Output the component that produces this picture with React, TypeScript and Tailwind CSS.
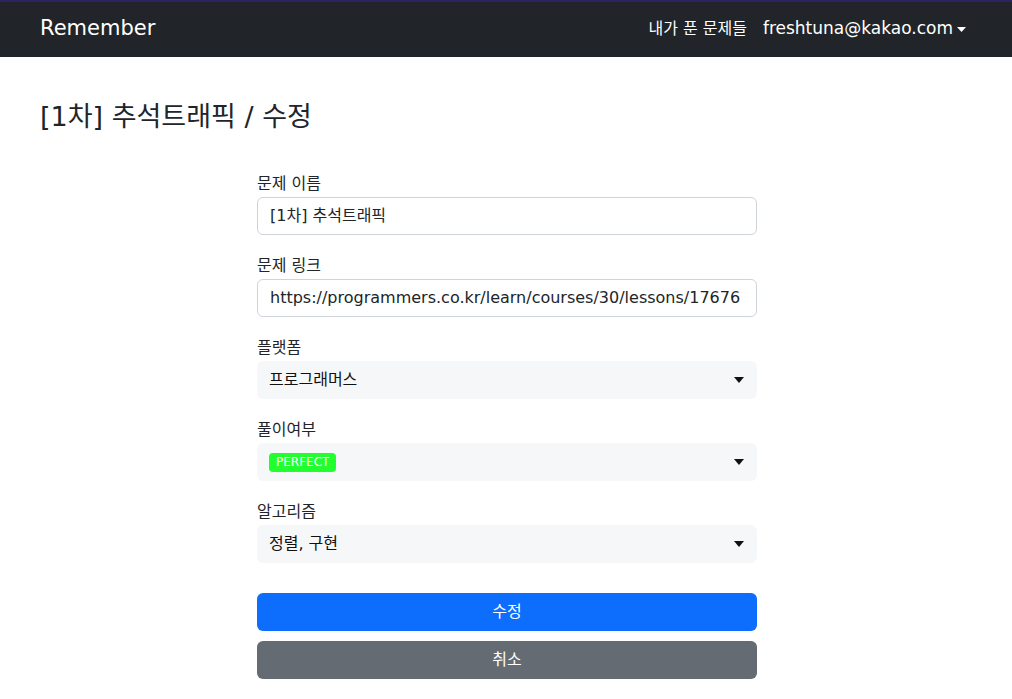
const FONT = "font-['DejaVu_Sans','Noto_Sans_CJK_KR',sans-serif]"

function Caret() {
  return (
    <svg width="10" height="6" viewBox="0 0 10 6" className="shrink-0">
      <path d="M0 0h10L5 6z" fill="#111" />
    </svg>
  )
}

function TextField({ label, value }: { label: string; value: string }) {
  return (
    <div className="flex flex-col">
      <label className="text-[16px] leading-6 text-[#212529] mb-px">{label}</label>
      <div className="h-[38px] border border-[#ced4da] rounded-[6px] px-3 flex items-center overflow-hidden">
        <span className="text-[16px] text-[#212529] whitespace-nowrap">{value}</span>
      </div>
    </div>
  )
}

function SelectField({ label, children }: { label: string; children: React.ReactNode }) {
  return (
    <div className="flex flex-col">
      <label className="text-[16px] leading-6 text-[#212529] mb-px">{label}</label>
      <div className="h-[38px] bg-[#f6f7f9] rounded-[6px] pl-3 pr-[13px] flex items-center justify-between">
        <div className="flex items-center">{children}</div>
        <Caret />
      </div>
    </div>
  )
}

export default function App() {
  return (
    <div className={`min-h-screen bg-white ${FONT}`}>
      <nav className="h-[57px] bg-[#212529] border-t-2 border-[#2d2262] flex items-center justify-between pl-10 pr-[46px] pb-px">
        <span className="text-white text-[21px]">Remember</span>
        <div className="flex items-center gap-[16px] text-white">
          <span className="text-[16px]">내가 푼 문제들</span>
          <span className="flex items-center gap-1 text-[17px]">
            freshtuna@kakao.com
            <svg width="9" height="5" viewBox="0 0 9 5">
              <path d="M0 0h9L4.5 5z" fill="#fff" />
            </svg>
          </span>
        </div>
      </nav>

      <main className="px-10">
        <h2 className="text-[27px] text-[#212529] mt-[40px] leading-[40px]">[1차] 추석트래픽 / 수정</h2>

        <form className="w-[500px] mx-auto translate-x-px mt-[35px] flex flex-col gap-[19px]">
          <TextField label="문제 이름" value="[1차] 추석트래픽" />
          <TextField label="문제 링크" value="https://programmers.co.kr/learn/courses/30/lessons/17676" />
          <SelectField label="플랫폼">
            <span className="text-[16px] text-[#111]">프로그래머스</span>
          </SelectField>
          <SelectField label="풀이여부">
            <span className="bg-[#22ff2e] text-white text-[12px] leading-[19px] px-[7px] rounded-[4px]">PERFECT</span>
          </SelectField>
          <SelectField label="알고리즘">
            <span className="text-[16px] text-[#111]">정렬, 구현</span>
          </SelectField>

          <div className="flex flex-col gap-[10px] mt-[11px]">
            <button type="button" className="h-[38px] rounded-[6px] bg-[#0d6efd] text-white text-[16px]">
              수정
            </button>
            <button type="button" className="h-[38px] rounded-[6px] bg-[#646b73] text-white text-[16px]">
              취소
            </button>
          </div>
        </form>
      </main>
    </div>
  )
}
